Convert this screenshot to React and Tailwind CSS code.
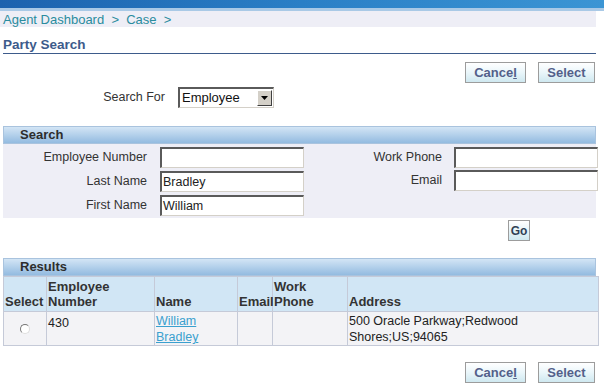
import React from "react";

const font = { fontFamily: '"Liberation Sans", Arial, sans-serif' };

function Btn({ children, className = "" }) {
  return (
    <button
      className={
        "h-[21px] border border-[#9c9c9c] bg-gradient-to-b from-[#ffffff] via-[#eaf6fa] to-[#cfe8f0] text-[13px] font-bold text-[#53608a] leading-none " +
        className
      }
    >
      {children}
    </button>
  );
}

function Field({ value = "", width = "w-[144px]" }) {
  return (
    <div
      className={
        width +
        " h-[21px] bg-white border-t-2 border-l-2 border-t-[#5a5a5a] border-l-[#5a5a5a] border-b border-r border-b-[#d4d0c8] border-r-[#d4d0c8] pl-[1px] text-[12.5px] leading-[18px] text-[#222]"
      }
    >
      {value}
    </div>
  );
}

function SectionHeader({ title }) {
  return (
    <div className="h-[18px] border border-[#a9c3de] bg-gradient-to-b from-[#d3e5f5] to-[#93bbe0] pl-[16px] text-[13px] font-bold leading-[16px] text-[#2d2d2d]">
      {title}
    </div>
  );
}

export default function App() {
  return (
    <div className="w-[604px] h-[390px] bg-white overflow-hidden" style={font}>
      {/* top bar */}
      <div className="h-[8px] bg-gradient-to-r from-[#1c62ae] via-[#2a7fc6] to-[#3b95d4]" />
      <div className="h-[3px] bg-[#a9c9e6]" />

      <div className="w-[596px]">
        {/* breadcrumb */}
        <div className="h-[16px] bg-[#eeeef6] pl-[3px] text-[13px] leading-[17px] text-[#2a8c9e]">
          Agent Dashboard&nbsp; &gt;&nbsp; Case&nbsp; &gt;
        </div>

        <div className="ml-[3px]">
          <div className="mt-[10px] border-b-[1.5px] border-[#3d5b8b] text-[13.5px] font-bold leading-[15px] text-[#3d5b8b] pb-[1px]">
            Party Search
          </div>

          <div className="mt-[8px] flex justify-end gap-[12px] pr-[1px]">
            <Btn className="w-[61px]">
              Cance<span className="underline">l</span>
            </Btn>
            <Btn className="w-[57px]">Select</Btn>
          </div>

          {/* search for */}
          <div className="mt-[4px] flex items-center">
            <div className="w-[162px] text-right text-[12.5px] text-[#333]">Search For</div>
            <div className="ml-[13px] w-[96px] h-[21px] flex items-center bg-white border-t-2 border-l-2 border-t-[#5a5a5a] border-l-[#5a5a5a] border-b border-r border-b-[#d4d0c8] border-r-[#d4d0c8] pl-[2px] pr-[1px] text-[13px] text-[#111]">
              <span className="flex-1">Employee</span>
              <span className="w-[15px] h-[16px] flex items-center justify-center bg-[#d4d0c8] border border-t-white border-l-white border-b-[#404040] border-r-[#404040]">
                <svg width="7" height="4" viewBox="0 0 7 4">
                  <path d="M0 0h7L3.5 4z" fill="#000" />
                </svg>
              </span>
            </div>
          </div>

          {/* search section */}
          <div className="mt-[18px]">
            <SectionHeader title="Search" />
            <div className="bg-[#eeeef6] pt-[3px] pb-[2px] flex">
              <div className="w-[301px] flex flex-col gap-[3px]">
                {[
                  ["Employee Number", ""],
                  ["Last Name", "Bradley"],
                  ["First Name", "William"],
                ].map(([l, v]) => (
                  <div key={l} className="flex items-center">
                    <div className="w-[144px] text-right text-[12.5px] text-[#333]">{l}</div>
                    <div className="ml-[13px]">
                      <Field value={v} />
                    </div>
                  </div>
                ))}
              </div>
              <div className="flex flex-col gap-[2px]">
                {["Work Phone", "Email"].map((l) => (
                  <div key={l} className="flex items-center">
                    <div className="w-[138px] text-right text-[12.5px] text-[#333]">{l}</div>
                    <div className="ml-[12px]">
                      <Field />
                    </div>
                  </div>
                ))}
              </div>
            </div>
          </div>

          <div className="mt-[2px] flex justify-end pr-[66px]">
            <button className="w-[22px] h-[21px] border border-[#9c9c9c] bg-gradient-to-b from-white to-[#cfe8f0] text-[12px] font-bold text-[#2f3f55] leading-none">
              Go
            </button>
          </div>

          {/* results */}
          <div className="mt-[17px]">
            <SectionHeader title="Results" />
            <table className="w-[596px] table-fixed border-collapse text-[13px]">
              <colgroup>
                <col className="w-[43px]" />
                <col className="w-[108px]" />
                <col className="w-[83px]" />
                <col className="w-[35px]" />
                <col className="w-[75px]" />
                <col />
              </colgroup>
              <thead>
                <tr className="h-[35px] bg-[#d1e6f5] align-bottom text-left font-bold text-[#333] leading-[15px]">
                  <th className="border border-[#c5cad8] px-[1px] pb-[2px]">Select</th>
                  <th className="border border-[#c5cad8] px-[1px] pb-[2px]">Employee Number</th>
                  <th className="border border-[#c5cad8] px-[1px] pb-[2px]">Name</th>
                  <th className="border border-[#c5cad8] px-[1px] pb-[2px]">Email</th>
                  <th className="border border-[#c5cad8] px-[1px] pb-[2px]">Work Phone</th>
                  <th className="border border-[#c5cad8] px-[1px] pb-[2px]">Address</th>
                </tr>
              </thead>
              <tbody>
                <tr className="h-[34px] bg-[#f3f3f6] align-top text-[12.5px] leading-[16px] text-[#222]">
                  <td className="border border-[#c5cad8] align-middle">
                    <div className="mx-auto w-[10px] h-[10px] rounded-full border border-[#777] border-r-[#ddd] border-b-[#ddd] bg-white" />
                  </td>
                  <td className="border border-[#c5cad8] px-[1px] pt-[3px]">430</td>
                  <td className="border border-[#c5cad8] px-[1px] pt-[1px] text-[#3aa0cf] underline">
                    William
                    <br />
                    Bradley
                  </td>
                  <td className="border border-[#c5cad8]" />
                  <td className="border border-[#c5cad8]" />
                  <td className="border border-[#c5cad8] px-[1px] pt-[1px]">
                    500 Oracle Parkway;Redwood Shores;US;94065
                  </td>
                </tr>
              </tbody>
            </table>
          </div>

          <div className="mt-[16px] flex justify-end gap-[12px] pr-[1px]">
            <Btn className="w-[61px]">
              Cance<span className="underline">l</span>
            </Btn>
            <Btn className="w-[57px]">Select</Btn>
          </div>
        </div>
      </div>
    </div>
  );
}
